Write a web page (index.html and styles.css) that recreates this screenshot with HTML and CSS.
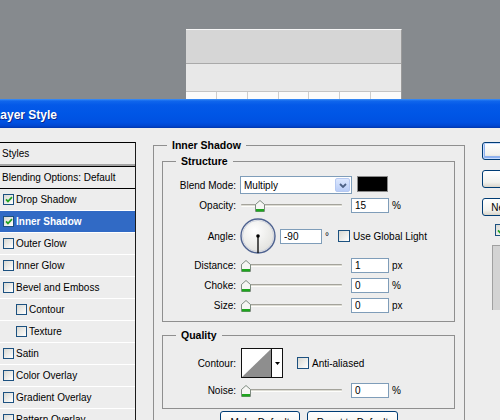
FILE: index.html
```html
<!DOCTYPE html>
<html lang="en">

<head>
    <meta charset="UTF-8">
    <meta name="viewport" content="width=device-width, initial-scale=1.0">
    <title>Layer Style</title>
    <link rel="stylesheet" href="styles.css">
</head>

<body>
    <!-- document window behind the dialog -->
    <div class="desktop">
        <div class="canvas">
            <div class="canvas_top"></div>
            <div class="canvas_mid"></div>
            <div class="canvas_cells">
                <span></span><span></span><span></span><span></span><span></span><span></span><span></span>
            </div>
        </div>
    </div><!-- .desktop end -->

    <div class="titlebar"><span class="title">Layer Style</span></div>

    <div class="dialog">
        <ul class="styles">
            <li class="styles_head">Styles</li>
            <li class="blend">Blending Options: Default</li>
            <li><span class="check"><svg width="8" height="7" viewBox="0 0 8 7"><path d="M1 3.3 L3 5.4 L7 1.2" fill="none" stroke="#21a121" stroke-width="1.7"/></svg></span>Drop Shadow</li>
            <li class="active"><span class="check"><svg width="8" height="7" viewBox="0 0 8 7"><path d="M1 3.3 L3 5.4 L7 1.2" fill="none" stroke="#21a121" stroke-width="1.7"/></svg></span>Inner Shadow</li>
            <li><span class="check"></span>Outer Glow</li>
            <li><span class="check"></span>Inner Glow</li>
            <li><span class="check"></span>Bevel and Emboss</li>
            <li class="sub"><span class="check"></span>Contour</li>
            <li class="sub"><span class="check"></span>Texture</li>
            <li><span class="check"></span>Satin</li>
            <li><span class="check"></span>Color Overlay</li>
            <li><span class="check"></span>Gradient Overlay</li>
            <li><span class="check"></span>Pattern Overlay</li>
        </ul><!-- .styles end -->

        <div class="options">
            <fieldset class="group outer">
                <legend>Inner Shadow</legend>

                <fieldset class="group structure">
                    <legend>Structure</legend>

                    <div class="row r_blend">
                        <label>Blend Mode:</label>
                        <div class="select">
                            <span class="select_text">Multiply</span>
                            <span class="select_btn"><svg width="8" height="5" viewBox="0 0 8 5"><path d="M1 1 L4 4 L7 1" fill="none" stroke="#4d6185" stroke-width="1.8"/></svg></span>
                        </div>
                        <span class="swatch"></span>
                    </div>

                    <div class="row r_slider tight">
                        <label>Opacity:</label>
                        <div class="slider" style="--v: 15">
                            <span class="track"></span>
                            <svg class="thumb" width="10" height="12" viewBox="0 0 10 12"><path d="M0.5 4.5 L5 0.5 L9.5 4.5 V11.5 H0.5 Z" fill="#f6f6f4" stroke="#7f8c80"/><rect x="1" y="9" width="8" height="2.5" fill="#1fa51f"/></svg>
                        </div>
                        <input class="num" type="text" value="15">
                        <span class="unit">%</span>
                    </div>

                    <div class="row r_angle">
                        <label>Angle:</label>
                        <svg class="dial" width="36" height="36" viewBox="0 0 36 36">
                            <defs>
                                <radialGradient id="dialfill" cx="40%" cy="35%" r="70%">
                                    <stop offset="0" stop-color="#ffffff"/>
                                    <stop offset="1" stop-color="#e0e0dc"/>
                                </radialGradient>
                            </defs>
                            <circle cx="18" cy="18" r="17" fill="url(#dialfill)" stroke="#4e6290" stroke-width="1.4"/>
                            <circle cx="18" cy="18" r="15.6" fill="none" stroke="#cfd3de" stroke-width="1"/>
                            <line x1="18" y1="18" x2="18" y2="35" stroke="#000" stroke-width="1.3"/>
                            <circle cx="18" cy="18" r="1.8" fill="#000"/>
                        </svg>
                        <input class="num num_angle" type="text" value="-90">
                        <span class="deg">°</span>
                        <span class="check check_lg"></span>
                        <span class="check_label">Use Global Light</span>
                    </div>

                    <div class="row r_slider tight">
                        <label>Distance:</label>
                        <div class="slider" style="--v: 0">
                            <span class="track"></span>
                            <svg class="thumb" width="10" height="12" viewBox="0 0 10 12"><path d="M0.5 4.5 L5 0.5 L9.5 4.5 V11.5 H0.5 Z" fill="#f6f6f4" stroke="#7f8c80"/><rect x="1" y="9" width="8" height="2.5" fill="#1fa51f"/></svg>
                        </div>
                        <input class="num" type="text" value="1">
                        <span class="unit">px</span>
                    </div>

                    <div class="row r_slider">
                        <label>Choke:</label>
                        <div class="slider" style="--v: 0">
                            <span class="track"></span>
                            <svg class="thumb" width="10" height="12" viewBox="0 0 10 12"><path d="M0.5 4.5 L5 0.5 L9.5 4.5 V11.5 H0.5 Z" fill="#f6f6f4" stroke="#7f8c80"/><rect x="1" y="9" width="8" height="2.5" fill="#1fa51f"/></svg>
                        </div>
                        <input class="num" type="text" value="0">
                        <span class="unit">%</span>
                    </div>

                    <div class="row r_slider">
                        <label>Size:</label>
                        <div class="slider" style="--v: 0">
                            <span class="track"></span>
                            <svg class="thumb" width="10" height="12" viewBox="0 0 10 12"><path d="M0.5 4.5 L5 0.5 L9.5 4.5 V11.5 H0.5 Z" fill="#f6f6f4" stroke="#7f8c80"/><rect x="1" y="9" width="8" height="2.5" fill="#1fa51f"/></svg>
                        </div>
                        <input class="num" type="text" value="0">
                        <span class="unit">px</span>
                    </div>
                </fieldset><!-- .structure end -->

                <fieldset class="group quality">
                    <legend>Quality</legend>

                    <div class="row r_contour">
                        <label>Contour:</label>
                        <div class="contour">
                            <svg width="29" height="28" viewBox="0 0 29 28"><rect width="29" height="28" fill="#fff"/><polygon points="0,28 29,0 29,28" fill="#8e8e8e"/></svg>
                            <span class="contour_btn"><svg width="5" height="3" viewBox="0 0 5 3"><polygon points="0,0 5,0 2.5,3" fill="#000"/></svg></span>
                        </div>
                        <span class="check check_lg check_aa"></span>
                        <span class="check_label">Anti-aliased</span>
                    </div>

                    <div class="row r_slider">
                        <label>Noise:</label>
                        <div class="slider" style="--v: 0">
                            <span class="track"></span>
                            <svg class="thumb" width="10" height="12" viewBox="0 0 10 12"><path d="M0.5 4.5 L5 0.5 L9.5 4.5 V11.5 H0.5 Z" fill="#f6f6f4" stroke="#7f8c80"/><rect x="1" y="9" width="8" height="2.5" fill="#1fa51f"/></svg>
                        </div>
                        <input class="num" type="text" value="0">
                        <span class="unit">%</span>
                    </div>
                </fieldset><!-- .quality end -->

                <div class="defaults">
                    <button class="btn btn_make">Make Default</button>
                    <button class="btn btn_reset">Reset to Default</button>
                </div>
            </fieldset><!-- .outer end -->
        </div><!-- .options end -->

        <div class="side">
            <button class="btn btn_ok">OK</button>
            <button class="btn">Cancel</button>
            <button class="btn btn_last">New Style...</button>
            <div class="preview_row">
                <span class="check check_lg"><svg width="8" height="7" viewBox="0 0 8 7"><path d="M1 3.3 L3 5.4 L7 1.2" fill="none" stroke="#21a121" stroke-width="1.7"/></svg></span>
                <span class="check_label">Preview</span>
            </div>
            <div class="preview"></div>
        </div><!-- .side end -->
    </div><!-- .dialog end -->
</body>

</html>
```

FILE: styles.css
```css
* {
    margin: 0;
    padding: 0;
    box-sizing: border-box;
}

li {
    list-style: none;
}

body {
    width: 500px;
    height: 420px;
    overflow: hidden;
    background-color: #ededed;
    font-family: "Liberation Sans", Arial, sans-serif;
    font-size: 10px;
    color: #000;
}

/* document behind the dialog */
.desktop {
    height: 99px;
    background-color: #868a8e;
    padding: 29px 0 0 186px;
}

.canvas {
    width: 216px;
    height: 70px;
    display: flex;
    flex-direction: column;
    border-top: 1px solid #f6f6f6;
    border-right: 1px solid #9a9a9a;
}

.canvas_top {
    height: 34px;
    background-color: #d6d6d6;
    border-bottom: 1px solid #a9a9a9;
}

.canvas_mid {
    height: 28px;
    background-color: #e8e8e8;
    border-bottom: 1px solid #c4c4c4;
}

.canvas_cells {
    flex: 1;
    display: flex;
    background-color: #fbfbfb;
}

.canvas_cells span {
    flex: 1;
    border-right: 1px solid #cdcdcd;
}

.canvas_cells span:last-child {
    border-right: none;
}

/* title bar */
.titlebar {
    height: 29px;
    padding-top: 3px;
    background: linear-gradient(#3d8ff5 0, #1066ec 2px, #0459e8 6px, #0056e6 50%, #0051e2 80%, #0046d0 93%, #0036ad 100%);
}

.title {
    display: block;
    margin-left: -7px;
    font: bold 12px/26px "Liberation Sans", Arial, sans-serif;
    color: #fff;
    text-shadow: 1px 1px 0 #0a2a8f;
}

/* dialog body */
.dialog {
    display: flex;
    align-items: flex-start;
    padding-top: 11px;
}

.styles {
    width: 136px;
    flex: none;
    margin-top: 3px;
    border-right: 1px solid #1a1a1a;
}

.styles li {
    display: flex;
    align-items: center;
    line-height: 21px;
    padding-left: 3px;
    border-bottom: 1px solid #fff;
    white-space: nowrap;
}

.styles .styles_head {
    padding-left: 2px;
    border-top: 1px solid #000;
    border-bottom: 2px solid #a3a3a3;
}

.styles .blend {
    padding-left: 2px;
    border-top: 1px solid #000;
    border-bottom: 1px solid #000;
}

.styles .sub {
    padding-left: 16px;
}

.styles .active {
    background-color: #316ac5;
    color: #fff;
    font-weight: bold;
}

.check {
    width: 11px;
    height: 11px;
    flex: none;
    margin-right: 2px;
    display: flex;
    align-items: center;
    justify-content: center;
    border: 1px solid #1c5180;
    background: linear-gradient(135deg, #d8d8d2, #fff);
}

.check_lg {
    width: 12px;
    height: 12px;
    margin-right: 0;
}

.check_label {
    margin-left: 3px;
    white-space: nowrap;
}

/* options column */
.options {
    width: 312px;
    flex: none;
    margin-left: 17px;
}

.group {
    border: 1px solid #8f8f8f;
    min-width: 0;
}

.group legend {
    margin-left: 13px;
    padding: 0 5px;
    font-size: 10.5px;
    font-weight: bold;
    line-height: 12px;
}

.outer {
    height: 320px;
}

.structure {
    margin: 4px 9px 0 8px;
    padding: 9px 0 8px;
}

.quality {
    margin: 7px 9px 0 8px;
    padding: 7px 0 10px;
}

.row {
    display: flex;
    align-items: center;
}

.row + .row {
    margin-top: 5px;
}

.row.tight {
    margin-top: 4px;
}

.row label {
    width: 73px;
    flex: none;
    margin-right: 4px;
    text-align: right;
}

.r_blend {
    height: 18px;
}

.r_slider {
    height: 15px;
}

.r_angle {
    height: 36px;
}

.r_contour {
    height: 30px;
}

.select {
    width: 112px;
    height: 18px;
    display: flex;
    align-items: center;
    padding: 1px 1px 1px 3px;
    border: 1px solid #7f9db9;
    background-color: #fff;
}

.select_text {
    flex: 1;
}

.select_btn {
    width: 15px;
    height: 100%;
    display: flex;
    align-items: center;
    justify-content: center;
    border: 1px solid #b6c9f1;
    border-radius: 2px;
    background: linear-gradient(#dde8fe, #b9cdf7);
}

.swatch {
    width: 31px;
    height: 16px;
    margin: 0 0 2px 5px;
    border: 1px solid #8a8a8a;
    background-color: #000;
}

.slider {
    position: relative;
    width: 101px;
    height: 15px;
    margin-left: 1px;
    display: flex;
    align-items: center;
}

.track {
    flex: 1;
    height: 3px;
    border-top: 1px solid #a4a39b;
    border-bottom: 1px solid #fdfdfb;
    border-radius: 1px;
    background-color: #dcdbd3;
}

.thumb {
    position: absolute;
    top: 2px;
    left: calc((100% - 10px) * var(--v) / 100);
}

.num {
    width: 38px;
    height: 15px;
    margin-left: 9px;
    padding: 0 3px;
    border: 1px solid #7f9db9;
    background-color: #fff;
    font: 10px "Liberation Sans", Arial, sans-serif;
    color: #000;
    outline: none;
}

.unit {
    margin-left: 3px;
}

.num_angle {
    width: 42px;
    margin-left: 4px;
}

.deg {
    width: 13px;
    margin-left: 3px;
}

.contour {
    width: 42px;
    height: 30px;
    margin-left: 1px;
    display: flex;
    border: 1px solid #111;
    background-color: #fff;
}

.contour_btn {
    flex: 1;
    display: flex;
    align-items: center;
    justify-content: center;
    border-left: 1px solid #111;
}

.check_aa {
    margin-left: 14px;
}

/* buttons */
.btn {
    height: 23px;
    border: 1px solid #003c74;
    border-radius: 3px;
    background: linear-gradient(#fff, #f2f2ee 70%, #d9d4c9);
    font: 10px "Liberation Sans", Arial, sans-serif;
    color: #000;
    white-space: nowrap;
}

.defaults {
    display: flex;
    justify-content: center;
    gap: 7px;
    margin-top: 2px;
}

.btn_make {
    width: 80px;
}

.btn_reset {
    width: 91px;
}

.side {
    width: 80px;
    flex: none;
    margin: 3px 0 0 17px;
    display: flex;
    flex-direction: column;
}

.side .btn {
    width: 72px;
    height: 18px;
    margin-bottom: 10px;
}

.side .btn_ok {
    box-shadow: inset 0 0 0 1px #c9dcfc, inset 0 -1px 0 2px #8fb2ef;
}

.side .btn_last {
    margin-bottom: 8px;
}

.preview_row {
    display: flex;
    align-items: center;
    margin-left: 13px;
}

.preview {
    height: 65px;
    margin: 9px 0 0 10px;
    border-top: 1px solid #a0a0a0;
    border-left: 1px solid #a0a0a0;
    background-color: #d3d3d3;
}
```
